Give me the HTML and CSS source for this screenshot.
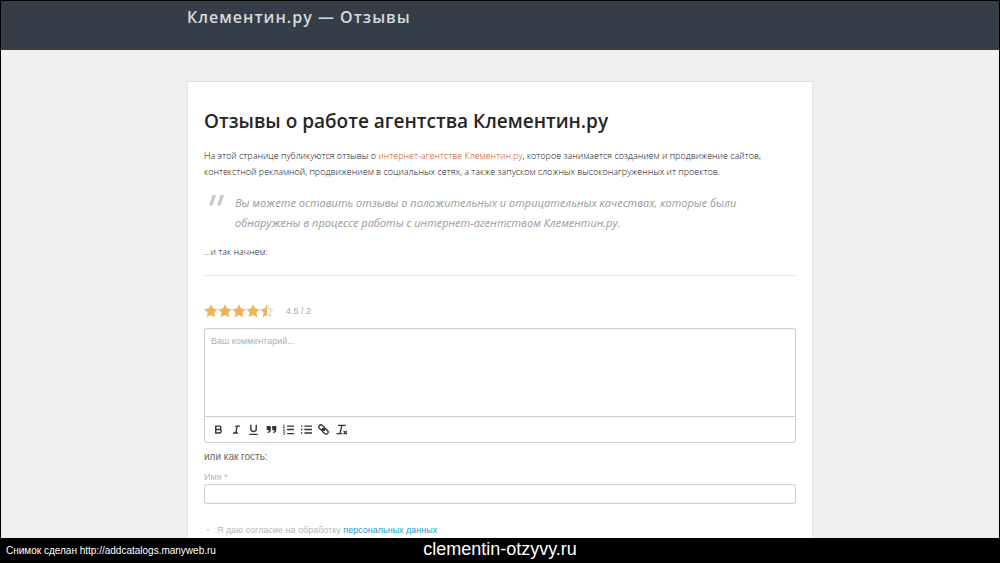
FILE: index.html
```html
<!DOCTYPE html>
<html lang="ru">
<head>
<meta charset="utf-8">
<meta name="viewport" content="width=device-width, initial-scale=1">
<title>Клементин.ру — Отзывы</title>
<link rel="stylesheet" href="styles.css">
</head>
<body>
<svg class="sprite" aria-hidden="true">
  <symbol id="star" viewBox="0 0 14 14"><path d="M7 .3l2.100 4.200 4.700.7-3.400 3.300.8 4.700L7 11l-4.200 2.200.8-4.700L.2 5.200l4.700-.7z"/></symbol>
</svg>
<div class="site">
  <header class="topbar">
    <div class="container"><p class="site-title">Клементин.ру — Отзывы</p></div>
  </header>
  <main class="container card">
    <h1 class="title">Отзывы о работе агентства Клементин.ру</h1>
    <p class="text">На этой странице публикуются отзывы о <a class="accent" href="#">интернет-агентстве Клементин.ру</a>, которое занимается созданием и продвижение сайтов, контекстной рекламной, продвижением в социальных сетях, а также запуском сложных высоконагруженных ит проектов.</p>
    <blockquote class="quote">
      <svg class="quote-mark" viewBox="0 0 16 11" aria-hidden="true"><path d="M3.500 0h3.500L3.500 10.500H0zM11.500 0H15l-3.500 10.500H8z"/></svg>
      <p class="quote-text">Вы можете оставить отзывы о положительных и отрицательных качествах, которые были обнаружены в процессе работы с интернет-агентством Клементин.ру.</p>
    </blockquote>
    <p class="text">…и так начнем:</p>
    <hr class="rule">
    <form class="comments">
      <div class="rating">
        <div class="stars" role="img" aria-label="4.5 из 5">
          <svg class="star"><use href="#star"/></svg>
          <svg class="star"><use href="#star"/></svg>
          <svg class="star"><use href="#star"/></svg>
          <svg class="star"><use href="#star"/></svg>
          <svg class="star" viewBox="0 0 14 14"><path class="star-empty" d="M7 1.300l1.800 3.700 4 .6-2.900 2.800.7 4L7 10.500"/><path d="M7 .3V11l-4.200 2.200.8-4.700L.2 5.200l4.700-.7z"/></svg>
        </div>
        <span class="score">4.5 / 2</span>
      </div>
      <div class="editor">
        <textarea class="editor-area" aria-label="Ваш комментарий" placeholder="Ваш комментарий..."></textarea>
        <div class="toolbar">
          <button type="button" class="tool" aria-label="Жирный"><svg viewBox="1 1 16 16"><path d="M5 4h5a2.500 2.500 0 0 1 0 5H5zM5 9h5.500a2.500 2.500 0 0 1 0 5H5z"/></svg></button>
          <button type="button" class="tool" aria-label="Курсив"><svg viewBox="1 1 16 16"><path d="M7 4h7M4 14h7M8 14l2-10"/></svg></button>
          <button type="button" class="tool" aria-label="Подчёркнутый"><svg viewBox="1 1 16 16"><path d="M5 2v6a4 4 0 0 0 8 0V2M3 16h12"/></svg></button>
          <button type="button" class="tool" aria-label="Цитата"><svg viewBox="1 1 16 16"><path class="solid" d="M2 4h6v5.500q0 4-4.500 5v-2q2-.5 2-2.500H2zM10 4h6v5.500q0 4-4.500 5v-2q2-.5 2-2.500H10z"/></svg></button>
          <button type="button" class="tool" aria-label="Нумерованный список"><svg viewBox="1 1 16 16"><path d="M7 4h10M7 9h10M7 15h10"/><path class="thin" d="M1.500 2.500l1-.5v4M1 6h3M1 8.500q2-1 2.500.5L1 11.500h3M1 13.500h2.500l-1 1.500q2 2-1.500 2"/></svg></button>
          <button type="button" class="tool" aria-label="Список"><svg viewBox="1 1 16 16"><path d="M6 4h11M6 9h11M6 14h11M1 4h2M1 9h2M1 14h2"/></svg></button>
          <button type="button" class="tool" aria-label="Ссылка"><svg viewBox="1 1 16 16"><rect x="2" y="3" width="9" height="6" rx="3" transform="rotate(40 6 6)"/><rect x="7" y="9" width="9" height="6" rx="3" transform="rotate(40 12 12)"/><path d="M7 7l4 4"/></svg></button>
          <button type="button" class="tool" aria-label="Очистить формат"><svg viewBox="1 1 16 16"><path d="M4 3h11M9.500 3L7 14M2 15h8M12 11l5 5M17 11l-5 5"/></svg></button>
        </div>
      </div>
      <p class="guest">или как гость:</p>
      <label class="label" for="name">Имя *</label>
      <input class="field" id="name" type="text">
      <div class="consent">
        <input class="check" id="agree" type="checkbox">
        <label for="agree">Я даю согласие на обработку <a class="link" href="#">персональных данных</a></label>
      </div>
    </form>
  </main>
</div>
<footer class="caption">
  <span class="caption-source">Снимок сделан http://addcatalogs.manyweb.ru</span>
  <span class="caption-domain">clementin-otzyvy.ru</span>
</footer>
</body>
</html>
```
FILE: styles.css
```css
* { box-sizing: border-box; }
body {
  margin: 0;
  height: 100vh;
  display: flex;
  flex-direction: column;
  background: #000;
  font-family: "Open Sans", sans-serif;
}
p, h1, blockquote { margin: 0; }
a { text-decoration: none; }
.sprite { display: none; }
.site {
  flex: 1;
  min-height: 0;
  overflow: hidden;
  border: 1px solid #000;
  border-bottom: 0;
  background: #efefef;
}
.container { width: 100%; max-width: 626px; margin: 0 auto; }
.topbar { height: 49px; background: #343e48; }
.site-title {
  padding-top: 4px;
  font-size: 16px;
  line-height: 24px;
  font-weight: 600;
  letter-spacing: 1px;
  color: #d8dadc;
}
.card {
  margin-top: 31px;
  padding: 25px 16px;
  min-height: 100%;
  border: 1px solid #e2e2e2;
  background: #fff;
}
.title {
  font-size: 19px;
  line-height: 28px;
  font-weight: 600;
  color: #262626;
}
.text {
  margin-top: 13px;
  font-size: 9px;
  line-height: 16px;
  font-weight: 300;
  color: #111;
}
.accent { color: #c4501f; }
.quote {
  display: flex;
  align-items: flex-start;
  gap: 10px;
  margin-top: 13px;
  padding-left: 5px;
}
.quote-mark { flex: none; width: 16px; height: 11px; margin-top: 2px; fill: #c8c8c8; }
.quote-text {
  font-size: 11px;
  line-height: 20px;
  font-style: italic;
  color: #999;
}
.quote + .text { margin-top: 11px; }
.rule { margin: 15px 0 0; border: 0; border-top: 1px solid #e8e8e8; }
.comments {
  margin-top: 28px;
  font-family: "Liberation Sans", Arial, sans-serif;
  font-size: 9px;
  color: #b0b7bd;
}
.rating { display: flex; align-items: center; gap: 12px; height: 14px; }
.stars { display: flex; }
.star { width: 14px; height: 14px; fill: #eeb45a; }
.star-empty { fill: none; stroke: #c9ced2; }
.score { color: #a4abb1; }
.editor {
  margin-top: 10px;
  border: 1px solid #ccc;
  border-radius: 3px;
}
.editor-area {
  display: block;
  width: 100%;
  height: 88px;
  padding: 7px 6px;
  border: 0;
  border-bottom: 1px solid #ccc;
  outline: 0;
  resize: none;
  background: none;
  font: inherit;
}
.editor-area::placeholder { color: #a9b1b8; }
.toolbar {
  display: flex;
  justify-content: space-between;
  max-width: 150px;
  padding: 7px 8px;
}
.tool { width: 11px; height: 11px; padding: 0; border: 0; background: none; }
.tool svg {
  display: block;
  width: 11px;
  height: 11px;
  fill: none;
  stroke: #333;
  stroke-width: 2;
}
.tool .thin { stroke-width: 1; }
.tool .solid { fill: #333; stroke: none; }
.guest { margin-top: 8px; font-size: 10px; line-height: 12px; color: #666; }
.label { display: block; margin-top: 8px; line-height: 12px; }
.field {
  display: block;
  width: 100%;
  height: 20px;
  margin-top: 1px;
  padding: 0 6px;
  border: 1px solid #ccc;
  border-radius: 3px;
  background: #fff;
  font: inherit;
}
.consent { display: flex; align-items: center; gap: 5px; margin-top: 20px; line-height: 12px; }
.check {
  appearance: none;
  width: 8px;
  height: 8px;
  margin: 0;
  background: radial-gradient(circle, #d5d9dc 0 1px, transparent 1px);
}
.link { color: #2b9cc4; }
.caption {
  display: grid;
  grid-template-columns: 1fr auto 1fr;
  align-items: center;
  height: 25px;
  padding: 0 6px;
  background: #000;
  color: #fff;
  font-family: "Liberation Sans", Arial, sans-serif;
}
.caption-source { font-size: 10px; line-height: 24px; }
.caption-domain { font-size: 18px; line-height: 20px; padding-bottom: 4px; }
```
